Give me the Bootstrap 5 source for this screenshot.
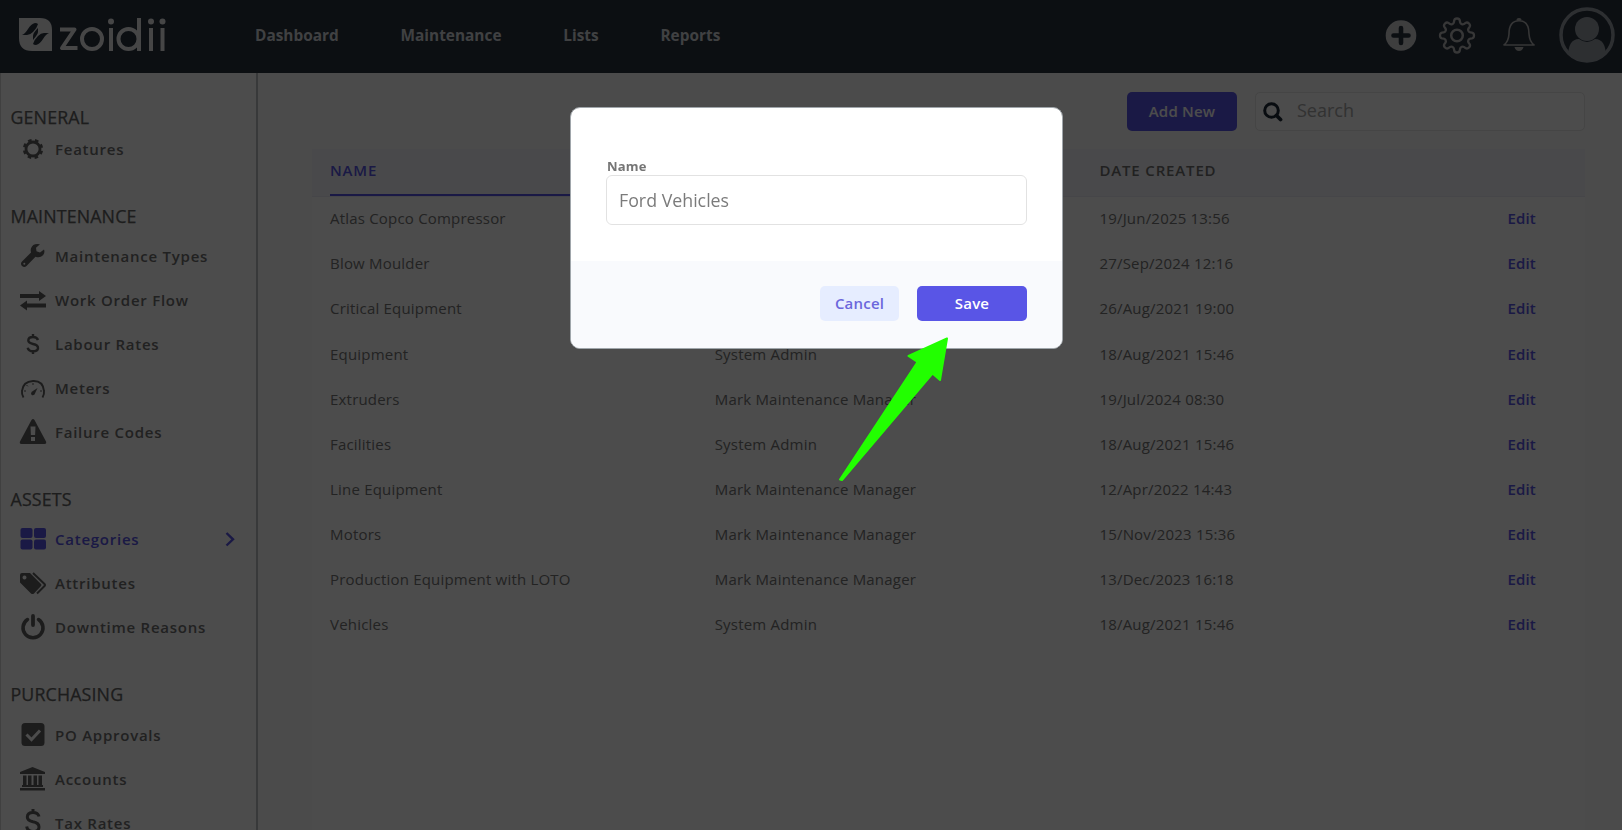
<!DOCTYPE html>
<html lang="en">
<head>
<meta charset="utf-8">
<title>Zoidii – Categories</title>
<link href="https://cdn.jsdelivr.net/npm/bootstrap@5.3.0/dist/css/bootstrap.min.css" rel="stylesheet">
<style>
  body { font-family: "Open Sans", "Noto Sans", sans-serif; font-size: 15px; color: #757575; height: 830px; overflow: hidden; background: #fff; }
  .topbar { height: 73px; background: #28323f; padding-bottom: 4px; }
  .topbar .logo { margin-left: 19px; width: 149px; }
  .main-links { margin-left: 87px; gap: 61.8px; padding-top: 2px; color: #d5d9de; }
  .main-links a { font-weight: 700; font-size: 15.4px; }
  .side-z { width: 258px; height: 757px; overflow: hidden; flex: none; border-right: 2px solid #bdbfc4; border-left: 1px solid #d8d8d8; padding-left: 10px; padding-top: 32px; background: #fdfdfd; }
  .side-title { font-size: 17.8px; line-height: 24px; font-weight: 500; color: #626262; margin: 33px 0 6px -.5px; letter-spacing: .15px; -webkit-text-stroke: .25px #626262; }
  .side-title.first { margin: 0 0 -2px -.5px; }
  .side-title.buying { margin-bottom: 7px; }
  .side-link { height: 44px; display: flex; align-items: center; font-weight: 600; letter-spacing: .75px; font-size: 15px; color: #707070; }
  .side-link svg { width: 28px; height: 28px; margin: 0 8.5px 0 7.5px; flex: none; fill: #5f5f5f; }
  .side-link.current { color: #5955e6; }
  .side-link.current svg { fill: #5955e6; }
  .side-link.current svg.chev { width: 12px; height: 16px; margin: 0 20px 0 auto; fill: none; stroke: #5955e6; stroke-width: 2.4; }
  .main-z { padding: 19px 37px 0 54px; background: #fafafa; }
  .btn-z, .btn-z:hover { background: #5955e6; color: #fff; font-weight: 600; font-size: 15px; letter-spacing: .2px; border: 0; border-radius: 5px; }
  .add-z { width: 110px; height: 39px; padding: 0 0 1px; }
  .search-z { width: 330px; height: 39px; border: 1px solid #e6e6e6; border-radius: 5px; background: #fdfdfd; padding-left: 7px; margin-left: 18px; }
  .search-z input { font-size: 18px; border: 0; background: transparent; outline: 0; width: 240px; margin-left: 14px; padding: 0 0 2px; }
  .search-z input::placeholder { color: #a8a8a8; opacity: 1; }
  .grid-z { margin-top: 18px; background: #fdfdfd; height: 700px; }
  .grid-head { height: 48px; background: #f5f5fa; border-bottom: 1px solid #eaecf3; padding-left: 18px; letter-spacing: .85px; font-weight: 600; color: #707070; }
  .grid-head > div { line-height: 43px; }
  .grid-head .sorted { color: #5955e6; border-bottom: 2px solid #5955e6; }
  .grid-row { height: 45.1px; padding-left: 18px; padding-bottom: 2px; letter-spacing: .2px; }
  .c-wide { width: 384.7px; flex: none; }
  .edit-z { margin-left: auto; margin-right: 49px; color: #5955e6; font-weight: 600; }
  .backdrop-z { position: fixed; inset: 0; background: rgba(0,0,0,.7); z-index: 10; }
  .modal-z { position: fixed; left: 570px; top: 107px; width: 493px; height: 242px; background: #fff; border: 1px solid #a0a6ab; border-radius: 10px; z-index: 20; overflow: hidden; display: flex; flex-direction: column; }
  .modal-z .upper { height: 153px; padding: 49px 35px 0; }
  .modal-z label { font-weight: 700; font-size: 13px; line-height: 18px; display: block; color: #757575; letter-spacing: .2px; padding-left: 1px; }
  .modal-z input { width: 421px; height: 50px; border: 1px solid #e2e2e2; border-radius: 6px; padding: 0 12px; font-size: 17.8px; color: #7b7b7b; outline: 0; }
  .modal-z .lower { flex: 1; background: #f9fafd; padding: 25px 35px 0 0; gap: 18px; }
  .cancel-z, .cancel-z:hover { background: #e6edff; color: #6b67dc; font-weight: 600; font-size: 15px; letter-spacing: .2px; border: 0; border-radius: 5px; width: 79px; height: 35px; padding: 0; }
  .save-z { width: 110px; height: 35px; padding: 0; }
  .pointer-z { position: fixed; left: 830px; top: 329px; z-index: 30; }
</style>
</head>
<body>
<nav class="topbar d-flex align-items-center">
  <svg class="logo" height="36" viewBox="0 0 149 36" fill="none">
    <path d="M0 1h21q12 0 12 12v21H13Q0 34 0 21z" fill="#eaeaea"/>
    <g fill="#28323f">
      <path d="M3 18q3-1 6-6t7-6q2 0 3 1-1 4-5 8-3 3-6 3z"/>
      <path d="M19 11v4q0 2-5 8v-4q0-3 5-8z"/>
      <path d="M30 16q-3 1-6 6t-7 6q-2 0-3-1 1-4 5-8 3-3 6-3z"/>
    </g>
    <g stroke="#eaeaea" stroke-width="4">
      <path d="M41 12.500h14.500L43 31h15.500" stroke-linejoin="round"/>
      <circle cx="73" cy="22" r="10"/><path d="M92 11v23"/>
      <circle cx="109.500" cy="22" r="10"/><path d="M120 1v33M132 11v23M143.500 11v23"/>
    </g>
    <g fill="#eaeaea"><circle cx="92" cy="4.500" r="3"/><circle cx="132" cy="4.500" r="3"/><circle cx="143.500" cy="4.500" r="3"/></g>
  </svg>
  <div class="main-links d-flex"><a>Dashboard</a><a>Maintenance</a><a>Lists</a><a>Reports</a></div>
  <div class="ms-auto d-flex align-items-center" style="margin-right:7px">
    <svg width="32" height="32" viewBox="0 0 32 32" style="margin-right:21px"><circle cx="16" cy="16.500" r="15.300" fill="#d0d0d0"/><path d="M16 9v15M8.500 16.500h15" stroke="#28323f" stroke-width="4.600" stroke-linecap="round"/></svg>
    <svg width="38" height="38" viewBox="-19 -19.500 38 38" fill="none" stroke="#b8b8b8" stroke-width="2.300" stroke-linejoin="round" style="margin-right:26px">
      <circle r="5.800" stroke-width="2.500"/>
      <path d="M-4.500-11.500Q-3-12-2.800-15Q-2.500-17 0-17Q2.500-17 2.800-15Q3-12 4.500-11.500L4.900-11.300Q6.400-10.600 8.600-12.600Q10.300-13.700 12-12Q13.700-10.300 12.600-8.600Q10.600-6.400 11.300-4.900L11.500-4.500Q12-3 15-2.800Q17-2.500 17 0Q17 2.500 15 2.800Q12 3 11.500 4.500L11.300 4.900Q10.600 6.400 12.600 8.600Q13.700 10.300 12 12Q10.300 13.700 8.600 12.600Q6.400 10.600 4.900 11.300L4.500 11.500Q3 12 2.800 15Q2.500 17 0 17Q-2.500 17-2.800 15Q-3 12-4.500 11.500L-4.900 11.300Q-6.400 10.600-8.600 12.600Q-10.300 13.700-12 12Q-13.700 10.300-12.600 8.600Q-10.600 6.400-11.300 4.900L-11.500 4.500Q-12 3-15 2.800Q-17 2.500-17 0Q-17-2.500-15-2.800Q-12-3-11.500-4.500L-11.300-4.900Q-10.600-6.400-12.600-8.600Q-13.700-10.300-12-12Q-10.300-13.700-8.600-12.600Q-6.400-10.600-4.900-11.300Z"/>
    </svg>
    <svg width="34" height="36" viewBox="0 -.5 34 36" fill="none" stroke="#b5b5b5" stroke-width="1.600" style="margin-right:23px">
      <path d="M2 27.500q4.500-3.500 5-11Q7 3.200 17 3.200T27 16.500q.5 7.500 5 11z" stroke-linejoin="round"/><path d="M15 2.500q2-2 4 0" stroke-width="2"/><path d="M12.500 29.500h9q-1 4-4.500 4t-4.500-4z" fill="#b5b5b5" stroke="none"/>
    </svg>
    <svg width="56" height="56" viewBox="0 0 56 56"><clipPath id="avatar"><circle cx="28" cy="28" r="26"/></clipPath>
      <g clip-path="url(#avatar)" fill="#989ea6"><circle cx="28" cy="22" r="12"/><path d="M9 50q0-18 11-18 8 6 16 0 11 0 11 18v6H9z"/></g>
      <circle cx="28" cy="28" r="26" fill="none" stroke="#989ea6" stroke-width="3.500"/></svg>
  </div>
</nav>
<div class="d-flex">
  <aside class="side-z">
    <div class="side-title first">GENERAL</div>
    <div class="side-link"><svg viewBox="0 0 28 28"><circle cx="14" cy="14" r="7" fill="none" stroke="#5f5f5f" stroke-width="2.800"/><circle cx="14" cy="14" r="8.900" fill="none" stroke="#5f5f5f" stroke-width="2.500" stroke-dasharray="3.600 3.390" stroke-dashoffset="-1.700"/></svg>Features</div>
    <div class="side-title">MAINTENANCE</div>
    <div class="side-link"><svg viewBox="0 0 28 28"><path d="M25 7.500l-4 3-3.500-1.200-.5-3.500 4-3.500q-7-1.500-9 4-.6 2 0 4.200L3 19.500q-2 2.200 0 4.500 2.300 2 4.500 0l9-9.300q4.500 1.500 7.500-1.400 2.200-2.600 1-5.800z"/><circle cx="5.300" cy="21.700" r="1" fill="#fdfdfd"/></svg>Maintenance Types</div>
    <div class="side-link"><svg viewBox="0 0 28 28"><path d="M1 8h19V5l7 5-7 5v-3H1zM27 17.500H8v-3l-7 5 7 5v-3h19z"/></svg>Work Order Flow</div>
    <div class="side-link"><svg viewBox="0 0 28 28"><path d="M19 10q-1-3-5-3-4.500 0-4.700 3.300 0 2.700 4.700 3.700 5.200 1 5 4.100-.3 3.200-5 3.200-4.500 0-5.300-3.500M14 4v4M14 21v3" fill="none" stroke="#5f5f5f" stroke-width="2.400"/></svg>Labour Rates</div>
    <div class="side-link"><svg viewBox="0 0 28 28"><path d="M4.500 23.500Q2.500 20.500 3 17 4 7.500 14 7t11 10q.5 3.500-1.500 6.500" fill="none" stroke="#5f5f5f" stroke-width="1.900"/><path d="M5 17h2M21 17h2M14 9v2M7.500 11l1.300 1.300" stroke="#5f5f5f" stroke-width="1"/><path d="M18.500 14l-3 6.500q-1.700 1.500-3 .2-1.200-1.500.3-2.900z"/></svg>Meters</div>
    <div class="side-link"><svg viewBox="0 0 28 28"><path fill-rule="evenodd" d="M12.500 2q1.500-2 3 0L27 23.500q.8 2.500-1.500 2.500h-23Q.2 26 1 23.500zM11.500 8.500l.4 8.500h4.200l.4-8.500zM12 19v4h4v-4z"/></svg>Failure Codes</div>
    <div class="side-title">ASSETS</div>
    <div class="side-link current"><svg viewBox="0 0 28 28"><rect x="1.500" y="3" width="12" height="10" rx="2"/><rect x="15" y="3" width="12" height="10" rx="2"/><rect x="1.500" y="14.500" width="12" height="10" rx="2"/><rect x="15" y="14.500" width="12" height="10" rx="2"/></svg>Categories<svg class="chev" viewBox="0 0 12 16"><path d="M2.500 2l6.500 6.300-6.500 6.200"/></svg></div>
    <div class="side-link"><svg viewBox="0 0 28 28"><path fill-rule="evenodd" d="M1 6q0-2 2-2h8l11 11q1 1 0 2l-7 7.500q-1.500 1-3 0L1 13.500zM5.500 6.500a2 2 0 1 0 .01 0z"/><path d="M14 4l11.500 11q1 1 0 2L18 24.500" fill="none" stroke="#5f5f5f" stroke-width="2"/></svg>Attributes</div>
    <div class="side-link"><svg viewBox="0 0 28 28" style="overflow:visible"><path d="M8.500 6.500a10 10 0 1 0 11 0" fill="none" stroke="#5f5f5f" stroke-width="3.500" stroke-linecap="round"/><path d="M14 3v9" stroke="#5f5f5f" stroke-width="3.800" stroke-linecap="round"/></svg>Downtime Reasons</div>
    <div class="side-title buying">PURCHASING</div>
    <div class="side-link"><svg viewBox="0 0 28 28"><rect x="2.500" y="2" width="23" height="23" rx="3.500"/><path d="M7.500 13.500l5 5 8.500-9" fill="none" stroke="#fdfdfd" stroke-width="3"/></svg>PO Approvals</div>
    <div class="side-link"><svg viewBox="0 0 28 28"><path d="M1 7l12.500-5L26 7v2H1zM4 10.500h3.500v9.500H4zM9 10.500h3.500v9.500H9zM14.500 10.500H18v9.500h-3.500zM19.500 10.500H23v9.500h-3.500zM3 20h21v2H3zM1 23h25v2.500H1z"/></svg>Accounts</div>
    <div class="side-link"><svg viewBox="0 0 28 28" style="overflow:visible"><path d="M20 7.500q-1-4-6-4-5.500 0-5.700 4.500 0 3.500 5.700 4.800 6.200 1.200 6 5.400-.3 4.300-6 4.300-5.500 0-6.300-5M14 0v4M14 22v4" fill="none" stroke="#5f5f5f" stroke-width="3"/></svg>Tax Rates</div>
  </aside>
  <main class="main-z flex-grow-1">
    <div class="d-flex justify-content-end">
      <button class="btn btn-z add-z">Add New</button>
      <div class="search-z d-flex align-items-center">
        <svg width="20" height="20" viewBox="0 0 20 20" fill="none" stroke="#1d2936"><circle cx="8.500" cy="8.500" r="6.800" stroke-width="3"/><path d="M13.500 13.500l4 4" stroke-width="3.800" stroke-linecap="round"/></svg>
        <input type="text" placeholder="Search">
      </div>
    </div>
    <section class="grid-z">
      <div class="grid-head d-flex"><div class="c-wide sorted">NAME</div><div class="c-wide">CREATED BY</div><div>DATE CREATED</div></div>
      <div class="grid-row d-flex align-items-center"><div class="c-wide">Atlas Copco Compressor</div><div class="c-wide">System Admin</div><div>19/Jun/2025 13:56</div><a class="edit-z text-decoration-none">Edit</a></div>
      <div class="grid-row d-flex align-items-center"><div class="c-wide">Blow Moulder</div><div class="c-wide">System Admin</div><div>27/Sep/2024 12:16</div><a class="edit-z text-decoration-none">Edit</a></div>
      <div class="grid-row d-flex align-items-center"><div class="c-wide">Critical Equipment</div><div class="c-wide">System Admin</div><div>26/Aug/2021 19:00</div><a class="edit-z text-decoration-none">Edit</a></div>
      <div class="grid-row d-flex align-items-center"><div class="c-wide">Equipment</div><div class="c-wide">System Admin</div><div>18/Aug/2021 15:46</div><a class="edit-z text-decoration-none">Edit</a></div>
      <div class="grid-row d-flex align-items-center"><div class="c-wide">Extruders</div><div class="c-wide">Mark Maintenance Manager</div><div>19/Jul/2024 08:30</div><a class="edit-z text-decoration-none">Edit</a></div>
      <div class="grid-row d-flex align-items-center"><div class="c-wide">Facilities</div><div class="c-wide">System Admin</div><div>18/Aug/2021 15:46</div><a class="edit-z text-decoration-none">Edit</a></div>
      <div class="grid-row d-flex align-items-center"><div class="c-wide">Line Equipment</div><div class="c-wide">Mark Maintenance Manager</div><div>12/Apr/2022 14:43</div><a class="edit-z text-decoration-none">Edit</a></div>
      <div class="grid-row d-flex align-items-center"><div class="c-wide">Motors</div><div class="c-wide">Mark Maintenance Manager</div><div>15/Nov/2023 15:36</div><a class="edit-z text-decoration-none">Edit</a></div>
      <div class="grid-row d-flex align-items-center"><div class="c-wide">Production Equipment with LOTO</div><div class="c-wide">Mark Maintenance Manager</div><div>13/Dec/2023 16:18</div><a class="edit-z text-decoration-none">Edit</a></div>
      <div class="grid-row d-flex align-items-center"><div class="c-wide">Vehicles</div><div class="c-wide">System Admin</div><div>18/Aug/2021 15:46</div><a class="edit-z text-decoration-none">Edit</a></div>
    </section>
  </main>
</div>
<div class="backdrop-z"></div>
<div class="modal-z" role="dialog">
  <div class="upper"><label for="catName">Name</label><input id="catName" type="text" value="Ford Vehicles"></div>
  <div class="lower d-flex justify-content-end align-items-start">
    <button class="btn cancel-z">Cancel</button>
    <button class="btn btn-z save-z">Save</button>
  </div>
</div>
<svg class="pointer-z" width="130" height="160" viewBox="0 0 130 160"><path d="M117 9.500L78.500 27l9 6L10 150.500l2 .5L102.500 44.500l7.500 6.500z" fill="#22ff00" stroke="#22ff00" stroke-width="2" stroke-linejoin="round"/></svg>
</body>
</html>
